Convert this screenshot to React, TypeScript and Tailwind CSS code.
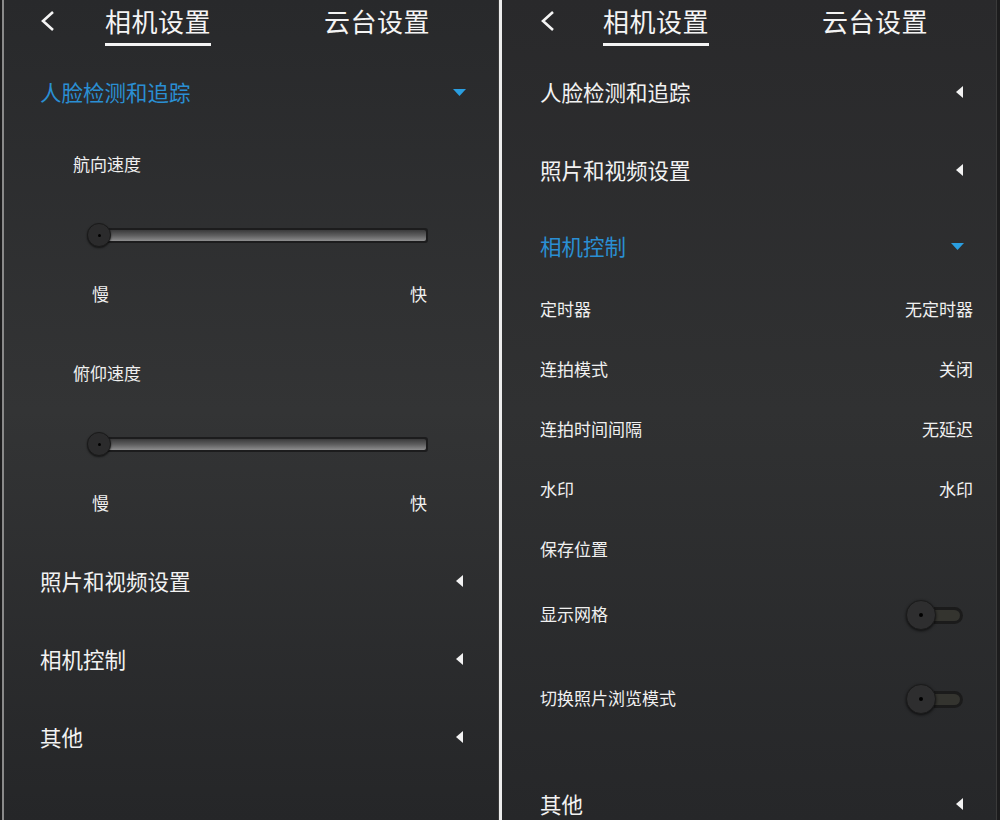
import React from 'react';

const font = "font-['Noto_Sans_CJK_SC','Noto_Sans',sans-serif]";

function CaretLeft() {
  return (
    <svg width="7" height="12" viewBox="0 0 7 12" className="shrink-0">
      <polygon points="7,0 7,12 0,6" fill="#f2f2f2" />
    </svg>
  );
}

function CaretDown() {
  return (
    <svg width="13" height="7" viewBox="0 0 13 7" className="shrink-0">
      <polygon points="0,0 13,0 6.5,7" fill="#2a9ee0" />
    </svg>
  );
}

function Header({ backW }: { backW: string }) {
  return (
    <div className="flex items-start h-[53px] pt-[3px] text-[26px] text-[#f4f4f4]">
      <div className={`h-[36px] flex items-center ${backW}`}>
        <svg width="16" height="22" viewBox="0 0 16 22">
          <polyline points="13,2 3,11 13,20" fill="none" stroke="#f4f4f4" strokeWidth="2.6" strokeLinejoin="miter" />
        </svg>
      </div>
      <div className="flex flex-col w-[219px]">
        <span className="leading-[36px] tracking-[0.5px]">相机设置</span>
        <div className="mt-[4px] h-[3px] w-[106px] bg-[#f4f4f4]" />
      </div>
      <span className="leading-[36px] tracking-[0.5px]">云台设置</span>
    </div>
  );
}

function SectionRow({
  label,
  open,
  h = 'h-[78px]',
  left = false,
}: {
  label: string;
  open?: boolean;
  h?: string;
  left?: boolean;
}) {
  const mr = open ? 'mr-[32px]' : left ? 'mr-[35px]' : 'mr-[33px]';
  return (
    <div className={`${h} flex items-center justify-between`}>
      <span className={`text-[21.5px] leading-none ${open ? 'text-[#2a8fd3]' : 'text-[#f2f2f2]'}`}>{label}</span>
      <div className={mr}>{open ? <CaretDown /> : <CaretLeft />}</div>
    </div>
  );
}

function Slider() {
  return (
    <div className="relative ml-[47px] w-[341px] h-[78px] flex items-center">
      <div className="ml-[10px] flex-1 h-[15px] rounded-r-[3px] bg-[#1c1c1d] p-[2px] pl-0">
        <div className="h-full rounded-r-[2px] bg-gradient-to-b from-[#3a3a3b] via-[#5e5e5f] to-[#8e8e8f]" />
      </div>
      <div className="absolute left-0 top-[27px] w-[24px] h-[24px] rounded-full bg-[#2b2b2c] border border-[#1a1a1a] shadow-[0_1px_2px_rgba(0,0,0,0.6)] flex items-center justify-center">
        <div className="w-[3px] h-[3px] rounded-full bg-black" />
      </div>
    </div>
  );
}

function SpeedBlock({ label }: { label: string }) {
  return (
    <div className="flex flex-col text-[#f0f0f0]">
      <div className="h-[65px] flex items-center pl-[33px]">
        <span className="text-[17px] leading-none">{label}</span>
      </div>
      <Slider />
      <div className="h-[38px] flex items-center justify-between pl-[52px] w-[387px]">
        <span className="text-[17px] leading-none">慢</span>
        <span className="text-[17px] leading-none">快</span>
      </div>
    </div>
  );
}

function ValueRow({ label, value }: { label: string; value?: string }) {
  return (
    <div className="h-[60px] flex items-center justify-between text-[#f0f0f0]">
      <span className="text-[17px] leading-none">{label}</span>
      {value && <span className="text-[17px] leading-none mr-[23px]">{value}</span>}
    </div>
  );
}

function Toggle() {
  return (
    <div className="relative w-[57px] h-[30px] flex items-center mr-[33px] mt-[4px]">
      <div className="ml-[28px] w-[29px] h-[17px] rounded-r-full bg-[#1b1b1b] p-[3px] pl-0">
        <div className="h-full rounded-r-full bg-[#34342f]" />
      </div>
      <div className="absolute left-0 top-0 w-[30px] h-[30px] rounded-full bg-[#2e2e2f] border border-[#1b1b1b] shadow-[0_1px_3px_rgba(0,0,0,0.7)] flex items-center justify-center">
        <div className="w-[4px] h-[4px] rounded-full bg-black" />
      </div>
    </div>
  );
}

function ToggleRow({ label, h }: { label: string; h: string }) {
  return (
    <div className={`${h} flex items-center justify-between text-[#f0f0f0]`}>
      <span className="text-[17px] leading-none">{label}</span>
      <Toggle />
    </div>
  );
}

export default function App() {
  return (
    <div className={`w-[1000px] h-[820px] flex bg-[#1c1c1d] overflow-hidden ${font}`}>
      <div className="ml-[2px] w-[497px] h-full border-l-2 border-[#8a8a8a] bg-gradient-to-b from-[#28292b] via-[#333435] to-[#252628] pl-[36px] border-r border-r-[#3a3a3a]">
        <Header backW="w-[65px]" />
        <SectionRow label="人脸检测和追踪" open />
        <SpeedBlock label="航向速度" />
        <div className="h-[28px]" />
        <SpeedBlock label="俯仰速度" />
        <div className="h-[21px]" />
        <SectionRow label="照片和视频设置" left />
        <SectionRow label="相机控制" left />
        <SectionRow label="其他" left />
      </div>
      <div className="w-[3px] h-full bg-[#ececec]" />
      <div className="w-[495px] h-full bg-gradient-to-b from-[#29292b] via-[#303132] to-[#262729] pl-[38px] border-r border-r-[#3a3a3a]">
        <Header backW="w-[63px]" />
        <SectionRow label="人脸检测和追踪" />
        <SectionRow label="照片和视频设置" />
        <div className="pt-[5px]">
          <SectionRow label="相机控制" open h="h-[64px]" />
        </div>
        <ValueRow label="定时器" value="无定时器" />
        <ValueRow label="连拍模式" value="关闭" />
        <ValueRow label="连拍时间间隔" value="无延迟" />
        <ValueRow label="水印" value="水印" />
        <ValueRow label="保存位置" />
        <ToggleRow label="显示网格" h="h-[70px]" />
        <ToggleRow label="切换照片浏览模式" h="h-[98px]" />
        <div className="h-[19px]" />
        <SectionRow label="其他" />
      </div>
    </div>
  );
}
